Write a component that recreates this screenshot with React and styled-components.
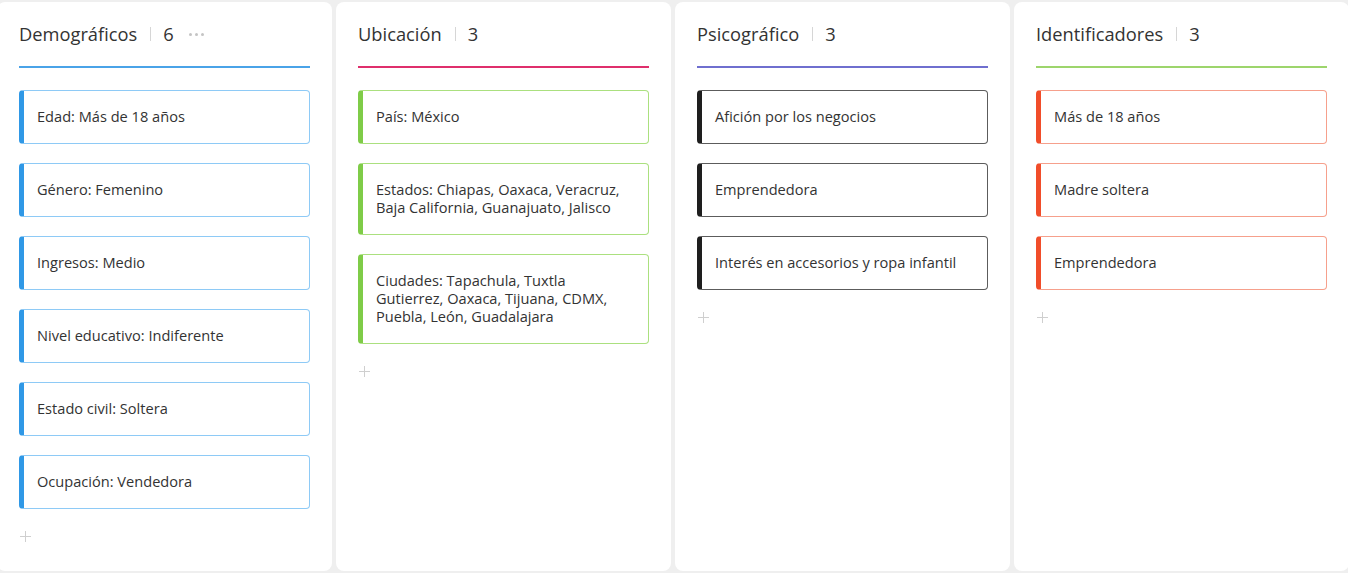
import React from "react"
import styled, { createGlobalStyle } from "styled-components"

const GlobalStyle = createGlobalStyle`
  html, body {
    margin: 0;
    padding: 0;
    background: #efefef;
    overflow: hidden;
  }

  body {
    font-family: "Open Sans", "Noto Sans", sans-serif;
    color: #333;
  }
`

const Board = styled.div`
  display: grid;
  grid-template-columns: repeat(4, 335px);
  column-gap: 4px;
  margin-left: -3px;
  padding: 2px 0;
  height: 569px;
`

const Column = styled.section`
  background: #fff;
  border-radius: 8px;
  padding: 19px 22px 0 22px;
  display: flex;
  flex-direction: column;
`

const Header = styled.header`
  display: flex;
  align-items: center;
  height: 26px;
  padding-bottom: 19px;
  border-bottom: 2px solid ${(p) => p.$line};
  margin-bottom: 22px;
`

const Title = styled.h2`
  margin: 0;
  font-size: 18.3px;
  font-weight: 400;
  color: #333;
  line-height: 26px;
`

const Divider = styled.span`
  width: 1px;
  height: 14px;
  background: #d6d6d6;
  margin: 0 12px 0 13px;
`

const Count = styled.span`
  font-size: 18.3px;
  color: #333;
  line-height: 26px;
`

const More = styled.span`
  margin-left: 15px;
  display: flex;
  gap: 3px;

  i {
    width: 3px;
    height: 3px;
    border-radius: 50%;
    background: #c4c4c4;
  }
`

const Cards = styled.div`
  display: flex;
  flex-direction: column;
  gap: 19px;
`

const Card = styled.div`
  border: 1px solid ${(p) => p.$border};
  border-left: 5px solid ${(p) => p.$bar};
  border-radius: 4px;
  padding: 16px 14px 18px 13px;
  font-size: 14.6px;
  line-height: 18px;
  color: #333;
`

const Add = styled.button`
  align-self: flex-start;
  border: 0;
  background: none;
  padding: 0;
  margin: 22px 0 0 1px;
  width: 12px;
  height: 12px;
  position: relative;
  cursor: pointer;

  &::before,
  &::after {
    content: "";
    position: absolute;
    background: #cfcfcf;
  }

  &::before {
    left: 5px;
    top: 0;
    width: 1px;
    height: 11px;
  }

  &::after {
    left: 0;
    top: 5px;
    width: 11px;
    height: 1px;
  }
`

const columns = [
  {
    title: "Demográficos",
    line: "#4aa3e8",
    border: "#8ecaf6",
    bar: "#2f98e6",
    more: true,
    items: [
      "Edad: Más de 18 años",
      "Género: Femenino",
      "Ingresos: Medio",
      "Nivel educativo: Indiferente",
      "Estado civil: Soltera",
      "Ocupación: Vendedora",
    ],
  },
  {
    title: "Ubicación",
    line: "#df2f6c",
    border: "#abe07f",
    bar: "#7fcc48",
    items: [
      "País: México",
      "Estados: Chiapas, Oaxaca, Veracruz, Baja California, Guanajuato, Jalisco",
      "Ciudades: Tapachula, Tuxtla Gutierrez, Oaxaca, Tijuana, CDMX, Puebla, León, Guadalajara",
    ],
  },
  {
    title: "Psicográfico",
    line: "#6f6fcf",
    border: "#5c5c5c",
    bar: "#1e1e1e",
    items: [
      "Afición por los negocios",
      "Emprendedora",
      "Interés en accesorios y ropa infantil",
    ],
  },
  {
    title: "Identificadores",
    line: "#9dd56c",
    border: "#f6a08c",
    bar: "#f14d2a",
    items: ["Más de 18 años", "Madre soltera", "Emprendedora"],
  },
]

const App = () => {
  return (
    <>
      <GlobalStyle />
      <Board>
        {columns.map((col) => (
          <Column key={col.title}>
            <Header $line={col.line}>
              <Title>{col.title}</Title>
              <Divider />
              <Count>{col.items.length}</Count>
              {col.more ? (
                <More>
                  <i />
                  <i />
                  <i />
                </More>
              ) : null}
            </Header>
            <Cards>
              {col.items.map((item) => (
                <Card key={item} $border={col.border} $bar={col.bar}>
                  {item}
                </Card>
              ))}
            </Cards>
            <Add aria-label="Agregar" />
          </Column>
        ))}
      </Board>
    </>
  )
}

export default App
